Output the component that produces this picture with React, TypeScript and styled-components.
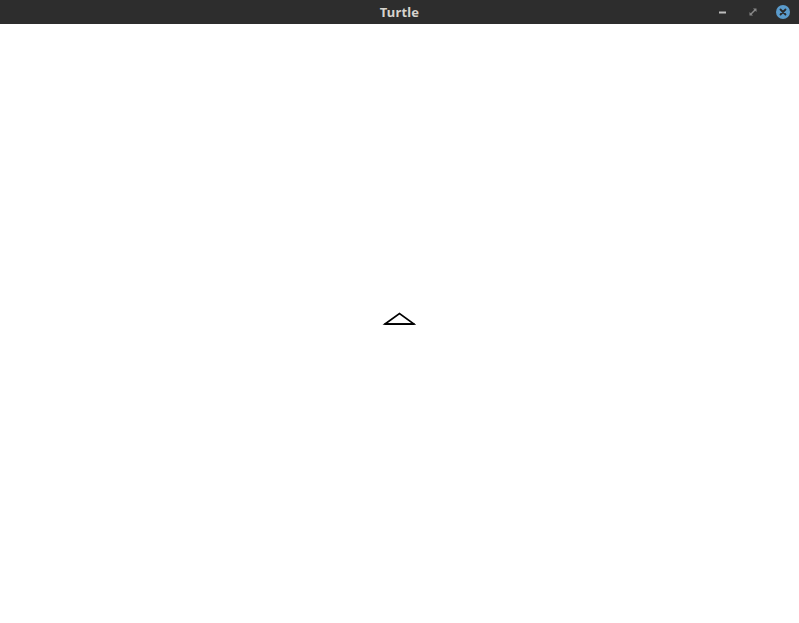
import React from 'react';
import styled, { createGlobalStyle } from 'styled-components';

const Global = createGlobalStyle`
  html, body {
    margin: 0;
    padding: 0;
    width: 799px;
    height: 623px;
    overflow: hidden;
    background: #ffffff;
  }
`;

const Window = styled.div`
  width: 799px;
  height: 623px;
  display: flex;
  flex-direction: column;
`;

const TitleBar = styled.div`
  height: 24px;
  flex: none;
  background: #2d2d2d;
  position: relative;
  display: flex;
  align-items: center;
  justify-content: center;
`;

const Title = styled.span`
  font-family: 'Noto Sans', 'DejaVu Sans', sans-serif;
  font-weight: 700;
  font-size: 13px;
  color: #d6d3cd;
  letter-spacing: 0.2px;
`;

const Controls = styled.div`
  position: absolute;
  right: 9px;
  top: 0;
  height: 24px;
  display: flex;
  align-items: center;
  gap: 16px;
`;

const CtrlButton = styled.div<{ $round?: boolean }>`
  width: 14px;
  height: 14px;
  display: flex;
  align-items: center;
  justify-content: center;
  border-radius: ${(p) => (p.$round ? '50%' : '0')};
  background: ${(p) => (p.$round ? '#5a9bcc' : 'transparent')};
`;

// the drawing surface: turtle sits on it at its own coordinates
const Canvas = styled.div`
  flex: 1;
  position: relative;
  background: #ffffff;
`;

const TurtleShape = styled.svg`
  position: absolute;
  left: 382px;
  top: 287px;
`;

export default function App() {
  return (
    <Window>
      <Global />
      <TitleBar>
        <Title>Turtle</Title>
        <Controls>
          <CtrlButton>
            <svg width="8" height="3" viewBox="0 0 8 3">
              <rect x="0" y="0.5" width="7" height="2" fill="#bdbdbd" />
            </svg>
          </CtrlButton>
          <CtrlButton>
            <svg width="8" height="8" viewBox="0 0 8 8">
              <path d="M4 0.5 L7.5 0.5 L7.5 4 Z" fill="#8a8a8a" />
              <path d="M0.5 4 L0.5 7.5 L4 7.5 Z" fill="#8a8a8a" />
              <path d="M2 6 L6 2" stroke="#8a8a8a" strokeWidth="1.4" />
            </svg>
          </CtrlButton>
          <CtrlButton $round>
            <svg width="8" height="8" viewBox="0 0 8 8">
              <path d="M1.5 1.5 L6.5 6.5 M6.5 1.5 L1.5 6.5" stroke="#2a2a2a" strokeWidth="1.8" strokeLinecap="round" />
            </svg>
          </CtrlButton>
        </Controls>
      </TitleBar>
      <Canvas>
        <TurtleShape width="34" height="16" viewBox="0 0 34 16">
          <polygon
            points="3,13 17.5,2.5 32,13"
            fill="none"
            stroke="#000"
            strokeWidth="1.6"
            strokeLinejoin="miter"
          />
          <rect x="2.5" y="12.2" width="30" height="1.8" fill="#000" />
        </TurtleShape>
      </Canvas>
    </Window>
  );
}
